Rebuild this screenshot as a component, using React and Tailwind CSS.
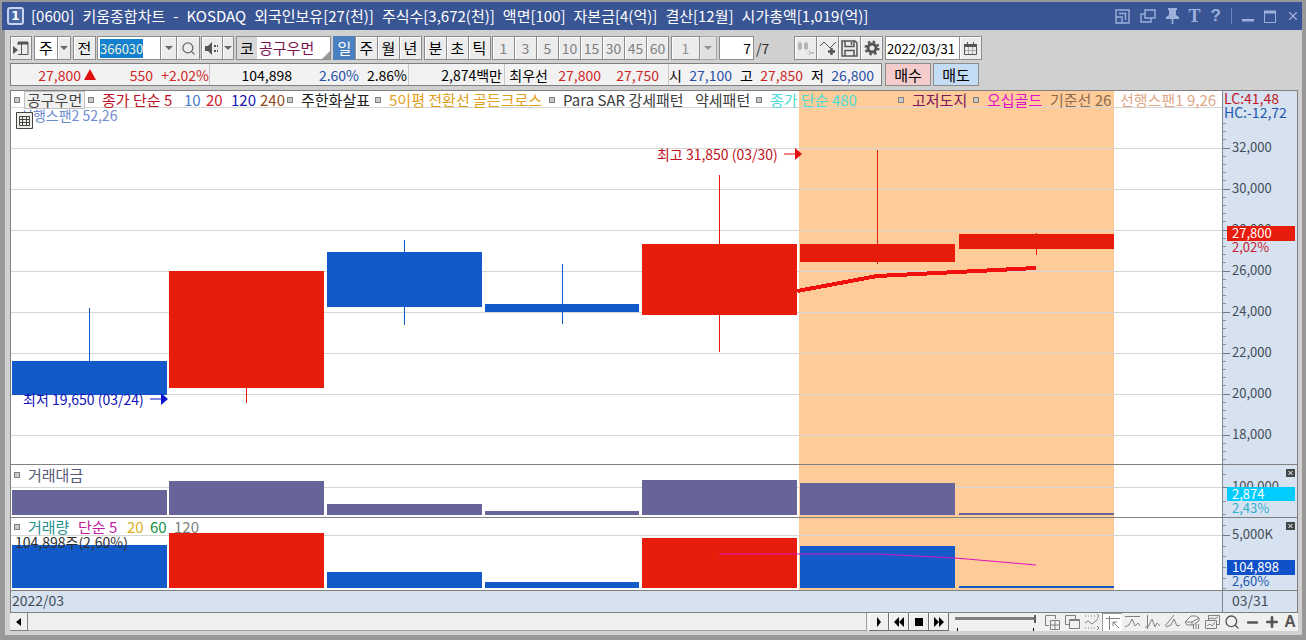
import React, { useEffect, useRef } from 'react';
import { Search, X, Minus, Plus } from 'lucide-react';

const PERIODS = ['일', '주', '월', '년'];
const SHORT_PERIODS = ['분', '초', '틱'];
const MINUTES = ['1', '3', '5', '10', '15', '30', '45', '60'];

const TITLE = [
  '[0600]',
  '키움종합차트',
  '-',
  'KOSDAQ',
  '외국인보유[27(천)]',
  '주식수[3,672(천)]',
  '액면[100]',
  '자본금[4(억)]',
  '결산[12월]',
  '시가총액[1,019(억)]',
];

const RED = '#e81c0a';
const BLUE = '#125ac8';
const PURPLE = '#67649a';

// y values are pixels inside each panel, x is the centre of the candle
const CANDLES = [
  { x: 78, top: 270, bottom: 304, high: 217, low: 304, color: BLUE },
  { x: 235, top: 180, bottom: 297, high: 180, low: 312, color: RED },
  { x: 393, top: 161, bottom: 216, high: 149, low: 234, color: BLUE },
  { x: 551, top: 213, bottom: 221, high: 173, low: 233, color: BLUE },
  { x: 709, top: 153, bottom: 224, high: 84, low: 261, color: RED },
  { x: 867, top: 153, bottom: 171, high: 59, low: 173, color: RED },
  { x: 1026, top: 143, bottom: 158, high: 142, low: 164, color: RED },
];
const AMOUNTS = [25, 34, 11, 4, 35, 32, 2];
const VOLUMES = [43, 55, 16, 6, 50, 42, 2];

const PRICES = [
  ['32,000', 57],
  ['30,000', 98],
  ['28,000', 139],
  ['26,000', 180],
  ['24,000', 221],
  ['22,000', 262],
  ['20,000', 303],
  ['18,000', 344],
];

const btn = 'flex h-6 items-center justify-center border border-[#8c8c8c] bg-[#ececec] shadow-[inset_1px_1px_0_#fff]';

const Arrow = () => (
  <svg width="8" height="4" viewBox="0 0 8 4" fill="#666">
    <path d="M0 0h8L4 4z" />
  </svg>
);

const TitleIcons = () => (
  <div className="flex items-center gap-[10px] text-[#9db0dc]">
    <button aria-label="분할">
      <svg width="15" height="15" viewBox="0 0 15 15" fill="none" stroke="currentColor" strokeWidth="1.4">
        <path d="M1 1h13v13H1zM1 8h6v6M4 4.500h6.500V11" />
      </svg>
    </button>
    <button aria-label="복제">
      <svg width="16" height="15" viewBox="0 0 16 15" fill="none" stroke="currentColor" strokeWidth="1.4">
        <path d="M5 1h10v8H5zM5 5H1v8h10V9" />
      </svg>
    </button>
    <button aria-label="고정">
      <svg width="13" height="16" viewBox="0 0 13 16" fill="currentColor">
        <path d="M2 0h9v2h-1v5l3 2v2H7.300v5H5.700v-5H0V9l3-2V2H2z" />
      </svg>
    </button>
    <button className="font-['Liberation_Serif',serif] text-[18px] leading-4 font-bold">T</button>
    <button className="font-['Liberation_Sans',sans-serif] text-[17px] leading-4 font-bold">?</button>
    <span className="h-4 w-px bg-[#6f86bd]" />
    <button aria-label="최소화">
      <svg width="12" height="14" viewBox="0 0 12 14" fill="currentColor">
        <path d="M0 10h12v2.500H0z" />
      </svg>
    </button>
    <button aria-label="최대화">
      <svg width="12" height="13" viewBox="0 0 12 13" fill="none" stroke="currentColor">
        <path d="M.5 1.500h11v11H.5z" />
        <path d="M0 2h12" strokeWidth="3" />
      </svg>
    </button>
    <button aria-label="닫기">
      <X size={14} strokeWidth={2} />
    </button>
  </div>
);

const Toolbar = () => {
  const codeRef = useRef(null);

  useEffect(() => {
    codeRef.current.focus();
    codeRef.current.select();
  }, []);

  return (
    <div className="flex h-6 items-center text-black">
      <button className={`${btn} w-[22px]`} aria-label="메뉴">
        <svg width="16" height="15" viewBox="0 0 16 15" fill="none" stroke="#555">
          <path d="M5 4V1.500h10v12H5M8.500 3v10" />
          <path d="M5 2h10" strokeWidth="3" />
          <path d="M0 5l5 4-5 4z" fill="#555" stroke="none" />
        </svg>
      </button>
      <div className="ml-0.5 flex">
        <button className={`${btn} w-6 bg-white`}>주</button>
        <button className={`${btn} -ml-px w-[14px]`} aria-label="종류 선택"><Arrow /></button>
      </div>
      <button className={`${btn} ml-0.5 w-[23px]`}>전</button>
      <div className="ml-px flex">
        <input
          ref={codeRef}
          aria-label="종목코드"
          defaultValue="366030"
          className="h-6 w-[64px] border border-[#8c8c8c] bg-white px-0.5 text-[13px] caret-transparent outline-none selection:bg-[#1580d0] selection:text-[#e8f4d8]"
        />
        <button className={`${btn} -ml-px w-[17px]`} aria-label="최근 종목"><Arrow /></button>
        <button className={`${btn} -ml-px w-6`} aria-label="검색"><Search size={15} color="#666" /></button>
      </div>
      <div className="ml-px flex">
        <button className={`${btn} w-[22px]`} aria-label="소리">
          <svg width="15" height="13" viewBox="0 0 15 13" fill="#555">
            <path d="M0 4h3l4-4v13l-4-4H0z" />
            <path d="M9 3h2v2H9zM9 8h2v2H9zM12 3h1v2h-1zM12 8h1v2h-1z" />
          </svg>
        </button>
        <button className={`${btn} -ml-px w-3`} aria-label="소리 설정"><Arrow /></button>
      </div>
      <div className="relative ml-0.5 flex h-6 w-[95px] items-center border border-[#8c8c8c] bg-white">
        <span className="flex h-full w-5 items-center justify-center bg-[#d8d8d8]">코</span>
        <span className="ml-0.5 text-[#7a1450]">공구우먼</span>
        <svg className="absolute right-0 bottom-0" width="8" height="8" fill="#999">
          <path d="M8 0v8H0z" />
        </svg>
      </div>
      <div className="ml-0.5 flex">
        {PERIODS.map((p) => (
          <button
            key={p}
            className={
              p === '일'
                ? 'flex h-6 w-[23px] items-center justify-center border border-[#5580b4] bg-[#4a80c0] text-white'
                : `${btn} -ml-px w-[23px]`
            }
          >
            {p}
          </button>
        ))}
      </div>
      <div className="ml-0.5 flex">
        {SHORT_PERIODS.map((p) => (
          <button key={p} className={`${btn} -mr-px w-[23px]`}>{p}</button>
        ))}
      </div>
      <div className="ml-0.5 flex text-[14px] text-[#808080]">
        {MINUTES.map((m) => (
          <button key={m} className={`${btn} -mr-px w-[23px]`}>{m}</button>
        ))}
      </div>
      <div className="ml-[3px] flex text-[14px] text-[#909090]">
        <button className={`${btn} w-[29px]`}>1</button>
        <button className={`${btn} -ml-px w-[18px] opacity-60`} aria-label="분 선택"><Arrow /></button>
      </div>
      <input
        aria-label="현재 번호"
        defaultValue="7"
        className="ml-0.5 h-6 w-[35px] border border-[#8c8c8c] bg-white px-0.5 text-right text-[14px]"
      />
      <span className="w-10 pl-0.5 text-[14px] text-[#303030]">/7</span>
      <div className="flex">
        <button className={`${btn} w-[23px]`} aria-label="봉 추가">
          <svg width="18" height="16" viewBox="0 0 18 16" fill="#b4b4b4">
            <path d="M1 3h4v6H1zM2.500 1h1v10h-1zM7 3h4v6H7zM8.500 1h1v10h-1zM10 12h7v1.500h-7zM13 10l-3 2.700 3 2.800z" />
          </svg>
        </button>
        <button className={`${btn} -ml-px w-[23px]`} aria-label="지표 추가">
          <svg width="18" height="16" viewBox="0 0 18 16" fill="none" stroke="#555">
            <path d="M1 6l4-4 6 6 6-6" />
            <path d="M12.500 8v7M9 11.500h7" strokeWidth="2.500" />
          </svg>
        </button>
        <button className={`${btn} -ml-px w-[23px]`} aria-label="저장">
          <svg width="17" height="17" viewBox="0 0 17 17" fill="none" stroke="#555" strokeWidth="1.500">
            <path d="M1 1h13l2 2v13H1zM4 1v5.500h9V1M4 16v-5.500h9V16M10.500 2v3" />
          </svg>
        </button>
        <button className={`${btn} -ml-px w-[23px]`} aria-label="설정">
          <svg width="16" height="16" viewBox="-8 -8 16 16" fill="none" stroke="#555">
            <circle r="4" strokeWidth="3" />
            <circle r="6.300" strokeWidth="2.400" strokeDasharray="2.400 2.548" />
          </svg>
        </button>
      </div>
      <div className="ml-0.5 flex">
        <input
          aria-label="날짜"
          defaultValue="2022/03/31"
          className="h-6 w-[75px] border border-[#8c8c8c] bg-white px-px text-[13px]"
        />
        <button className={`${btn} -ml-px w-[23px]`} aria-label="달력">
          <svg width="13" height="13" viewBox="0 0 13 13" fill="none" stroke="#555">
            <path d="M.5 2.500h12v10H.5zM3.500 0v3M9.500 0v3" />
            <path d="M0 3.500h13" strokeWidth="3" />
            <path d="M4.500 5v7M8.500 5v7M1 8.500h11" stroke="#aaa" />
          </svg>
        </button>
      </div>
    </div>
  );
};

const Cell = ({ width, color = 'text-black', children }) => (
  <span className={`${width} ${color} shrink-0 text-right whitespace-nowrap`}>{children}</span>
);

const QuoteBar = () => (
  <div className="mt-[3px] flex h-[23px] items-center gap-[3px]">
    <div className="flex h-full w-[872px] items-center border border-[#808080] bg-[#f2f2f2] text-[14px]">
      <div className="flex h-full w-[199px] items-center border-r border-[#c8c8c8]">
        <Cell width="w-[70px]" color="text-[#d02828]">27,800</Cell>
        <svg className="ml-[3px]" width="12" height="11" fill="#e01010">
          <path d="M6 0l6 11H0z" />
        </svg>
        <Cell width="w-[57px]" color="text-[#d02828]">550</Cell>
        <Cell width="w-14" color="text-[#d02828]">+2.02%</Cell>
      </div>
      <div className="flex h-full w-[199px] items-center border-r border-[#c8c8c8]">
        <Cell width="w-[82px]">104,898</Cell>
        <Cell width="w-[67px]" color="text-[#2850a8]">2.60%</Cell>
        <Cell width="w-12">2.86%</Cell>
      </div>
      <div className="flex h-full w-[96px] items-center border-r border-[#c8c8c8]">
        <Cell width="w-[93px]">2,874백만</Cell>
      </div>
      <div className="flex h-full w-[164px] items-center border-r border-[#c8c8c8]">
        <Cell width="w-[43px]">최우선</Cell>
        <Cell width="w-[53px]" color="text-[#d02828]">27,800</Cell>
        <Cell width="w-[58px]" color="text-[#d02828]">27,750</Cell>
      </div>
      <Cell width="w-[13px]">시</Cell>
      <Cell width="w-[50px]" color="text-[#2850a8]">27,100</Cell>
      <Cell width="w-[21px]">고</Cell>
      <Cell width="w-[50px]" color="text-[#d02828]">27,850</Cell>
      <Cell width="w-[21px]">저</Cell>
      <Cell width="w-[50px]" color="text-[#2850a8]">26,800</Cell>
    </div>
    <button className="h-full w-[46px] border border-[#8c8c8c] bg-[#f4cccc] text-black">매수</button>
    <button className="-ml-px h-full w-[46px] border border-[#8c8c8c] bg-[#c4dcf4] text-black">매도</button>
  </div>
);

const Dot = () => <span className="mr-[8px] h-[6px] w-[6px] shrink-0 border border-[#808080] bg-[#c8c8c8]" />;

const Item = ({ width, color, dot, children }) => (
  <span className={`${width} ${color} flex shrink-0 items-center whitespace-nowrap`}>
    {dot && <Dot />}
    {children}
  </span>
);

const Legend = () => (
  <div className="absolute inset-x-0 top-0 pl-[3px]">
    <div className="flex h-[18px] items-center">
      <Item dot width="w-[74px]" color="text-[#444]">
        <span className="-ml-1 border border-[#c0c0c0] bg-[#f0f0f0] px-[2px] leading-4">공구우먼</span>
      </Item>
      <Item dot width="w-[96px]" color="text-[#c01028]">종가 단순 5</Item>
      <Item width="w-[22px]" color="text-[#4478d0]">10</Item>
      <Item width="w-[25px]" color="text-[#d01828]">20</Item>
      <Item width="w-[29px]" color="text-[#1818b0]">120</Item>
      <Item width="w-[27px]" color="text-[#8c4a20]">240</Item>
      <Item dot width="w-[88px]" color="text-[#202020]">주한화살표</Item>
      <Item dot width="w-[174px]" color="text-[#e0a020]">5이평 전환선 골든크로스</Item>
      <Item dot width="w-[146px]" color="text-[#404040]">Para SAR 강세패턴</Item>
      <Item width="w-[61px]" color="text-[#404040]">약세패턴</Item>
      <Item dot width="w-[142px]" color="text-[#48dcd8]">종가 단순 480</Item>
      <Item dot width="w-[75px]" color="text-[#7a1860]">고저도지</Item>
      <Item dot width="w-[77px]" color="text-[#e010d0]">오십골드</Item>
      <Item width="w-[70px]" color="text-[#8c6c50]">기준선 26</Item>
      <Item width="w-[96px]" color="text-[#e0a888]">선행스팬1 9,26</Item>
    </div>
    <div className="relative text-[14px] leading-[12px] text-[#6c8cd0]">
      <span className="pl-[6px]">선행스팬2 52,26</span>
      <svg className="absolute top-[3px] left-[2px]" width="17" height="17" viewBox="0 0 17 17" fill="#f0f0e8" stroke="#444">
        <path d="M.5.5h16v16H.5z" />
        <path d="M3.500 4.500h10v9h-10zM3.500 7.500h10M3.500 10.500h10M6.500 4.500v9M10.500 4.500v9" />
      </svg>
    </div>
  </div>
);

const Plot = ({ height, grid, children }) => (
  <svg className="block w-full" height={height} viewBox={`0 0 1212 ${height}`} preserveAspectRatio="none" shapeRendering="crispEdges">
    <rect width="1212" height={height} fill="#fff" />
    <rect x="789" width="315" height={height} fill="#ffcc99" />
    {grid.map((y) => (
      <path key={y} d={`M0 ${y + 0.5}H1212`} stroke="#d6d6d6" />
    ))}
    {children}
  </svg>
);

const Axis = ({ height, ticks, children }) => (
  <svg className="block w-[75px] shrink-0 border-l border-[#808890] bg-[#d6e2f0]" height={height} fontSize="13">
    {ticks.map((t) => (
      <path key={t} d={`M0 ${t + 0.5}h3`} stroke="#8a929c" />
    ))}
    {children}
  </svg>
);

const CloseBox = () => (
  <g transform="translate(63 4)">
    <rect width="9" height="8" fill="#404848" />
    <path d="M2.500 2l4 4M6.500 2l-4 4" stroke="#fff" />
  </g>
);

const minorTicks = Array.from({ length: 42 }, (_, i) => Math.round(32 + i * 8.2));

const PricePanel = () => (
  <div className="flex border-b border-[#808080]">
    <div className="relative min-w-0 flex-1">
      <Plot height={373} grid={[16, ...PRICES.map((p) => p[1])]}>
        {CANDLES.map((c) => (
          <g key={c.x} fill={c.color}>
            <rect x={c.x - 77} y={c.top} width="155" height={c.bottom - c.top} />
            <rect x={c.x} y={c.high} width="1" height={c.low - c.high} />
          </g>
        ))}
        <path d="M787 200L867 185L947 181L1026 177" fill="none" stroke="#f01010" strokeWidth="4" />
      </Plot>
      <Legend />
      <div className="absolute top-[55px] right-[34.7%] flex items-center text-[14px] leading-4 text-[#c01020]">
        <span>최고 31,850 (03/30)</span>
        <svg className="ml-1.5" width="18" height="12" fill="#e01010">
          <path d="M0 5.500h11V0l7 6-7 6V6.500H0z" />
        </svg>
      </div>
      <div className="absolute top-[300px] left-3 flex items-center text-[14px] leading-4 text-[#1010b8]">
        <span>최저 19,650 (03/24)</span>
        <svg className="ml-1.5" width="18" height="12" fill="#1010d0">
          <path d="M0 5.500h11V0l7 6-7 6V6.500H0z" />
        </svg>
      </div>
    </div>
    <Axis height={373} ticks={minorTicks}>
      <text x="1" y="13" fontSize="14" fill="#c01828">LC:41,48</text>
      <text x="1" y="27" fontSize="14" fill="#2058b0">HC:-12,72</text>
      {PRICES.map(([label, y]) => (
        <g key={label}>
          <path d={`M0 ${y + 0.5}h7`} stroke="#707880" />
          <text x="9" y={y + 4} fill="#444c58">{label}</text>
        </g>
      ))}
      <rect x="4" y="135" width="68" height="15" fill={RED} />
      <text x="9" y="147" fill="#fff">27,800</text>
      <text x="9" y="161" fill="#c82030">2,02%</text>
    </Axis>
  </div>
);

const AmountPanel = () => (
  <div className="flex border-b border-[#808080]">
    <div className="relative min-w-0 flex-1">
      <Plot height={52} grid={[22]}>
        {AMOUNTS.map((v, i) => (
          <rect key={CANDLES[i].x} x={CANDLES[i].x - 77} y={50 - v} width="155" height={v} fill={PURPLE} />
        ))}
      </Plot>
      <div className="absolute top-0 left-[3px] flex h-[20px] items-center">
        <Item dot width="w-auto" color="text-[#585878]">거래대금</Item>
      </div>
    </div>
    <Axis height={52} ticks={[9, 36, 49]}>
      <path d="M0 22.500h7" stroke="#707880" />
      <text x="9" y="26" fill="#444c58">100,000</text>
      <rect x="4" y="22" width="68" height="14" fill="#00ccff" />
      <text x="9" y="34" fill="#fff">2,874</text>
      <text x="9" y="48" fill="#30b0d0">2,43%</text>
      <CloseBox />
    </Axis>
  </div>
);

const VolumePanel = () => (
  <div className="flex border-b border-[#808080]">
    <div className="relative min-w-0 flex-1">
      <Plot height={72} grid={[17]}>
        {VOLUMES.map((v, i) => (
          <rect
            key={CANDLES[i].x}
            x={CANDLES[i].x - 77}
            y={70 - v}
            width="155"
            height={v}
            fill={i === 1 || i === 4 ? RED : BLUE}
          />
        ))}
        <path d="M709 36L867 36L945 40L1026 47" fill="none" stroke="#e010c0" />
      </Plot>
      <div className="absolute top-0 left-[3px] flex h-[18px] items-center">
        <Item dot width="w-[64px]" color="text-[#289090]">거래량</Item>
        <Item width="w-[49px]" color="text-[#c018a0]">단순 5</Item>
        <Item width="w-[23px]" color="text-[#d8b020]">20</Item>
        <Item width="w-[24px]" color="text-[#109040]">60</Item>
        <Item width="w-auto" color="text-[#808080]">120</Item>
      </div>
      <div className="absolute top-[17px] left-1 text-[14px] leading-[14px] text-[#303030]">104,898주(2,60%)</div>
    </div>
    <Axis height={72} ticks={[7, 28, 38, 49, 60, 70]}>
      <path d="M0 17.500h7" stroke="#707880" />
      <text x="9" y="21" fill="#444c58">5,000K</text>
      <rect x="4" y="42" width="68" height="15" fill="#1050c8" />
      <text x="9" y="54" fill="#fff">104,898</text>
      <text x="9" y="68" fill="#2058b0">2,60%</text>
      <CloseBox />
    </Axis>
  </div>
);

// 16x16 outline drawings of the bottom tool strip
const TOOLS = [
  ['새 차트', 'M5 11.500H1.500v-10h10V5M6.500 6.500h9v9h-9zM11 6.500v9M6.500 11h9'],
  ['창 겹치기', 'M5 10.500H1.500v-9h10V5M5.500 5.500h10v9h-10zM5.500 6.500h10'],
  ['영역', 'M1 2h1M4 2h1M7 2h1M10 2h1M1 14h1M4 14h1M7 14h1M10 14h1M1 9l3-2 4 3 6-5M13 4l2-2-2-2M13 12l2 2-2 2'],
  ['기준선', 'M1 3.500h14M4.500 1v14M14 13L8 7M8 11V7h4'],
  ['추세', 'M1 2.500h15M1 13l4-2 3-6 3 7 3-3 2 3'],
  ['수직선', 'M3.500 1v14M1 13h3l4-8 3 8 2-4 3 3'],
  ['각도', 'M1 12L10 1M2 13l5-2 3-6 3 7 3-1'],
  ['지우개', 'M1 8l6-6h5l3 2v3l-6 4H3zM1 8h7l7-4M8 8v3M9.500 15v-4M12 15v-5M14.500 15v-5'],
  ['복사', 'M4.500 6V1.500h11v9h-3M5 5l3-1 2 1 4-2M1.500 6.500h11v8h-11zM3 12l3-2 2 2 3-4'],
];

const PLAYER = [
  ['재생', 'M5 2l4 5-4 5z'],
  ['뒤로', 'M7 2v10L2 7zM12 2v10L7 7z'],
  ['정지', 'M3 3h8v8H3z'],
  ['앞으로', 'M2 2v10l5-5zM7 2v10l5-5z'],
];

const BottomBar = () => (
  <div className="flex h-[18px] items-center bg-[#f0f0f0] text-[#555]">
    <button className="flex h-[18px] w-[18px] items-center justify-center border-r border-b border-[#808080]" aria-label="왼쪽">
      <svg width="5" height="8" fill="#000"><path d="M5 0v8L0 4z" /></svg>
    </button>
    <div className="h-full min-w-0 flex-1 border-r border-b border-[#a0a0a0] bg-[#efefef]" />
    <div className="ml-0.5 flex">
      {PLAYER.map(([label, d]) => (
        <button
          key={label}
          aria-label={label}
          className="flex h-[18px] w-5 items-center justify-center border-r border-b border-[#707070] bg-[#f0f0f0] shadow-[inset_1px_1px_0_#fff]"
        >
          <svg width="14" height="14" viewBox="0 0 14 14" fill="#000"><path d={d} /></svg>
        </button>
      ))}
    </div>
    <div className="mr-1.5 ml-1.5 flex h-full w-[81px] flex-col justify-between pt-1">
      <input
        type="range"
        aria-label="재생 속도"
        defaultValue="100"
        className="h-[3px] w-full appearance-none bg-[#808080] [&::-webkit-slider-thumb]:h-2 [&::-webkit-slider-thumb]:w-[2px] [&::-webkit-slider-thumb]:appearance-none [&::-webkit-slider-thumb]:bg-[#606060]"
      />
      <div className="flex justify-between px-0.5">
        <span className="h-[3px] w-px bg-black" />
        <span className="h-[3px] w-px bg-black" />
      </div>
    </div>
    {TOOLS.map(([label, d], i) => (
      <button
        key={label}
        aria-label={label}
        className={i === 3 ? 'flex h-[18px] w-5 items-center justify-center border-t border-l border-[#999] bg-white' : 'flex h-[18px] w-5 items-center justify-center'}
      >
        <svg width="16" height="16" viewBox="0 0 16 16" fill="none" stroke="#808080"><path d={d} /></svg>
      </button>
    ))}
    <button className="flex w-5 justify-center" aria-label="확대경"><Search size={16} /></button>
    <button className="flex w-5 justify-center" aria-label="축소"><Minus size={15} strokeWidth={4} /></button>
    <button className="flex w-5 justify-center" aria-label="확대"><Plus size={16} strokeWidth={4} /></button>
    <button className="w-4 font-['Liberation_Sans',sans-serif] text-[16px] font-bold">A</button>
  </div>
);

export default function App() {
  return (
    <div className="min-h-screen border-t-2 border-r-4 border-b-[5px] border-l-[5px] border-[#989898] bg-[#d0d0d0] font-['Noto_Sans_CJK_KR',sans-serif] text-[15px] leading-5">
      <header className="-ml-[3px] flex h-7 items-center justify-between bg-[#3a5594] pr-0.5 pl-[5px] text-white">
        <div className="flex items-center gap-[7px]">
          <span className="flex h-[18px] w-[17px] items-center justify-center rounded-[3px] border-2 border-[#c8d4f0] bg-[#4868a8] font-['DejaVu_Sans',sans-serif] text-[12px] leading-3 font-bold">
            1
          </span>
          <h1 className="flex gap-2 whitespace-nowrap">
            {TITLE.map((t) => (
              <span key={t}>{t}</span>
            ))}
          </h1>
        </div>
        <TitleIcons />
      </header>
      <main className="pt-1.5 pr-1 pl-[5px]">
        <Toolbar />
        <QuoteBar />
        <section className="mt-1 border border-[#808080]">
          <PricePanel />
          <AmountPanel />
          <VolumePanel />
          <div className="flex h-[21px] bg-[#d6e2f0] text-[14px] text-[#444c58]">
            <span className="flex-1 pl-px leading-[18px]">2022/03</span>
            <span className="w-[75px] border-l border-[#808890] pl-[9px] leading-[18px]">03/31</span>
          </div>
        </section>
        <BottomBar />
      </main>
    </div>
  );
}
